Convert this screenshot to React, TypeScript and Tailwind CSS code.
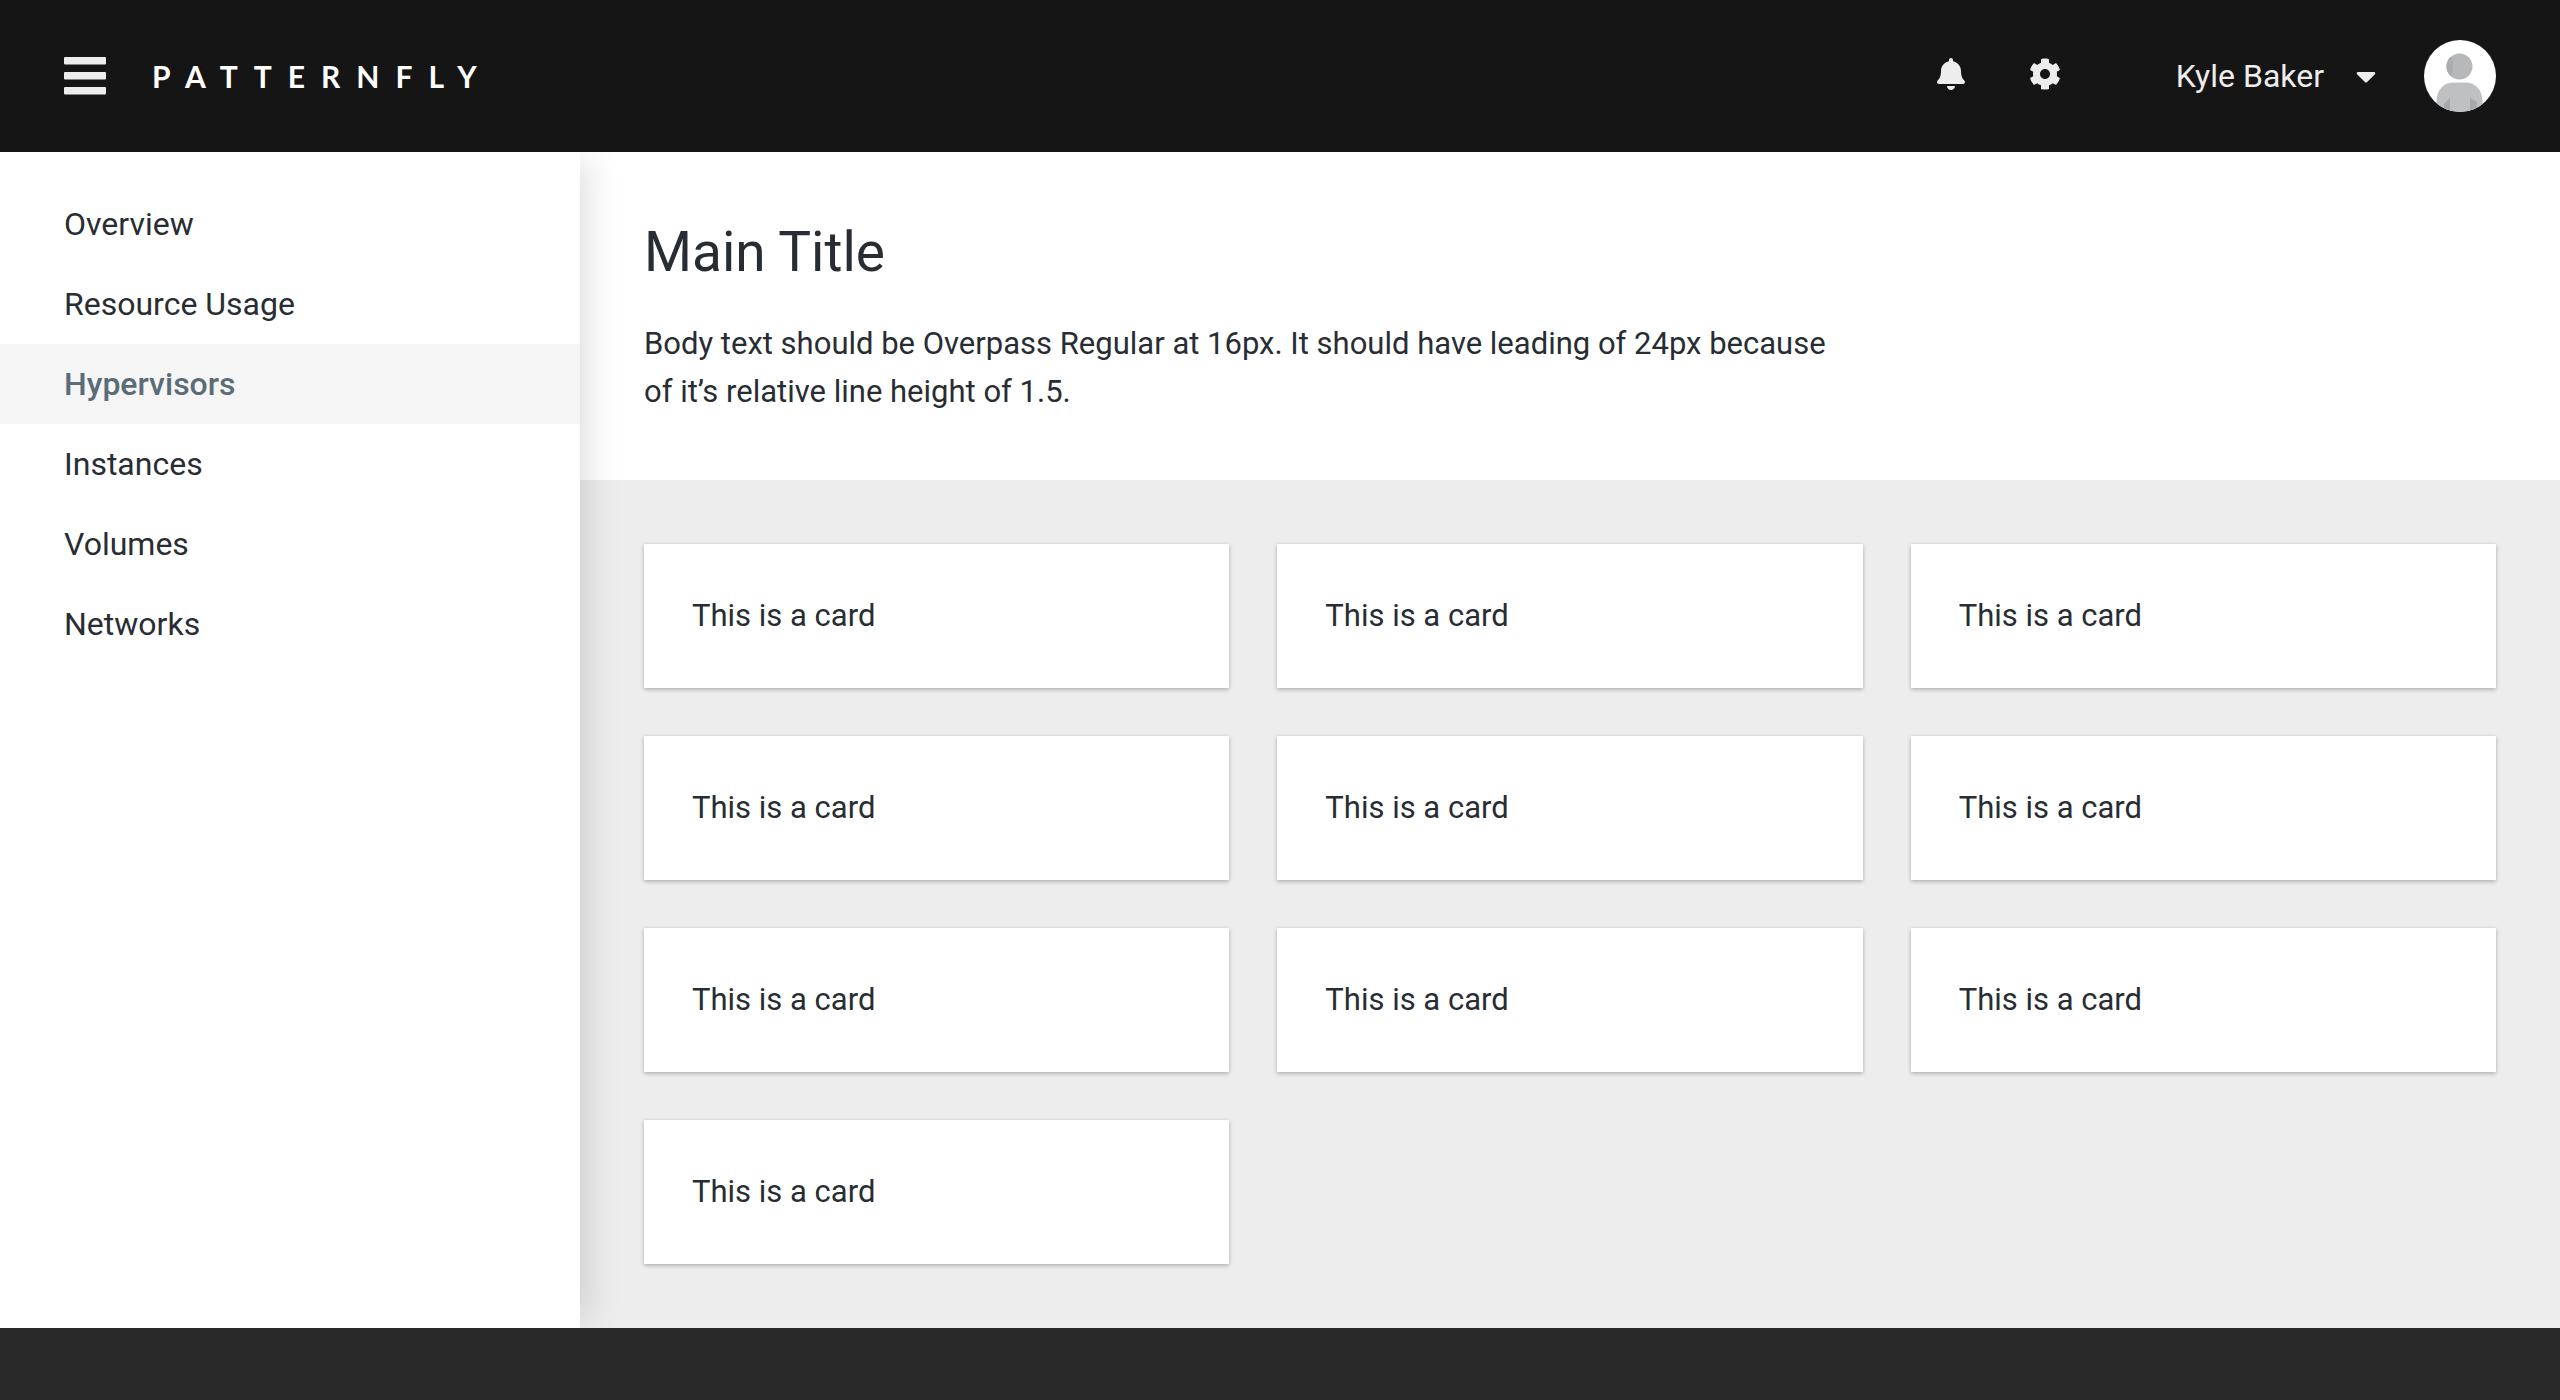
import React from "react";
import { FaBell, FaCaretDown, FaCog } from "react-icons/fa";

const navItems = ["Overview", "Resource Usage", "Hypervisors", "Instances", "Volumes", "Networks"];
const currentItem = "Hypervisors";
const cards = Array.from({ length: 10 }, (_, i) => ({ id: i, text: "This is a card" }));

function MenuIcon() {
  return (
    <svg width="42" height="38" viewBox="0 0 42 38" fill="currentColor" aria-hidden="true">
      <rect y="0" width="42" height="7.500" rx="1" />
      <rect y="15" width="42" height="7.500" rx="1" />
      <rect y="30" width="42" height="7.500" rx="1" />
    </svg>
  );
}

function Avatar() {
  return (
    <svg width="72" height="72" viewBox="0 0 72 72" role="img" aria-label="Kyle Baker">
      <defs>
        <clipPath id="avatar-clip">
          <circle cx="36" cy="36" r="36" />
        </clipPath>
      </defs>
      <g clipPath="url(#avatar-clip)">
        <rect width="72" height="72" fill="#ffffff" />
        <circle cx="35.500" cy="26.500" r="13" fill="#b6b8b9" />
        <path d="M27 16.500A13 13 0 0 0 27 36.400C29 33 30 20 27 16.500Z" fill="#abaeb0" />
        <path d="M12.500 72V61C13 50 19 42.500 30 42.500H41C52 42.500 58 50 58.500 61V72Z" fill="#bfc0c1" />
        <path d="M20 64L26 58V72H20Z" fill="#a6aaac" />
        <path d="M53 62L46 58V72H52Z" fill="#a6aaac" />
      </g>
    </svg>
  );
}

function Header() {
  return (
    <header className="flex items-center justify-between bg-[#151515] px-16 py-10 text-[#ededed]">
      <div className="flex items-center gap-[46px]">
        <button type="button" aria-label="Toggle navigation">
          <MenuIcon />
        </button>
        <a href="#" className="font-['Lato'] text-3xl leading-none font-bold tracking-[16px] text-white">
          PATTERNFLY
        </a>
      </div>
      <div className="flex items-center">
        <button type="button" aria-label="Notifications" className="mr-16 pb-1">
          <FaBell className="h-8 w-7" />
        </button>
        <button type="button" aria-label="Settings" className="mr-[115px] pb-1">
          <FaCog className="size-8" />
        </button>
        <button type="button" className="mr-12 flex items-center gap-8">
          <span>Kyle Baker</span>
          <FaCaretDown className="h-8 w-5" />
        </button>
        <Avatar />
      </div>
    </header>
  );
}

function Sidebar() {
  return (
    <nav
      aria-label="Main"
      className="z-10 w-[580px] shrink-0 bg-white py-8 shadow-[16px_0_32px_-8px_rgba(3,3,3,0.13)]"
    >
      <ul>
        {navItems.map((item) => (
          <li key={item}>
            <a
              href="#"
              aria-current={item === currentItem ? "page" : undefined}
              className={
                item === currentItem
                  ? "block bg-[#f5f5f5] px-16 py-4 font-medium text-[#5a6c78]"
                  : "block px-16 py-4"
              }
            >
              {item}
            </a>
          </li>
        ))}
      </ul>
    </nav>
  );
}

export default function App() {
  return (
    <div className="flex min-h-screen flex-col bg-[#292929] font-['Roboto',sans-serif] text-[32px] leading-12 text-[#282d33]">
      <Header />
      <div className="flex overflow-hidden">
        <Sidebar />
        <main className="flex-1 bg-[#ededed] text-[31px]">
          <section className="bg-white p-16">
            <h1 className="text-[55px] leading-[72px]">Main Title</h1>
            <p className="mt-8 max-w-[1216px]">
              Body text should be Overpass Regular at 16px. It should have leading of 24px because of it’s relative line
              height of 1.5.
            </p>
          </section>
          <ul className="grid grid-cols-3 gap-12 p-16">
            {cards.map((card) => (
              <li
                key={card.id}
                className="bg-white p-12 shadow-[0_2px_4px_rgba(3,3,3,0.2),0_0_4px_rgba(3,3,3,0.1)]"
              >
                {card.text}
              </li>
            ))}
          </ul>
        </main>
      </div>
      <footer className="min-h-18 flex-1" />
    </div>
  );
}
